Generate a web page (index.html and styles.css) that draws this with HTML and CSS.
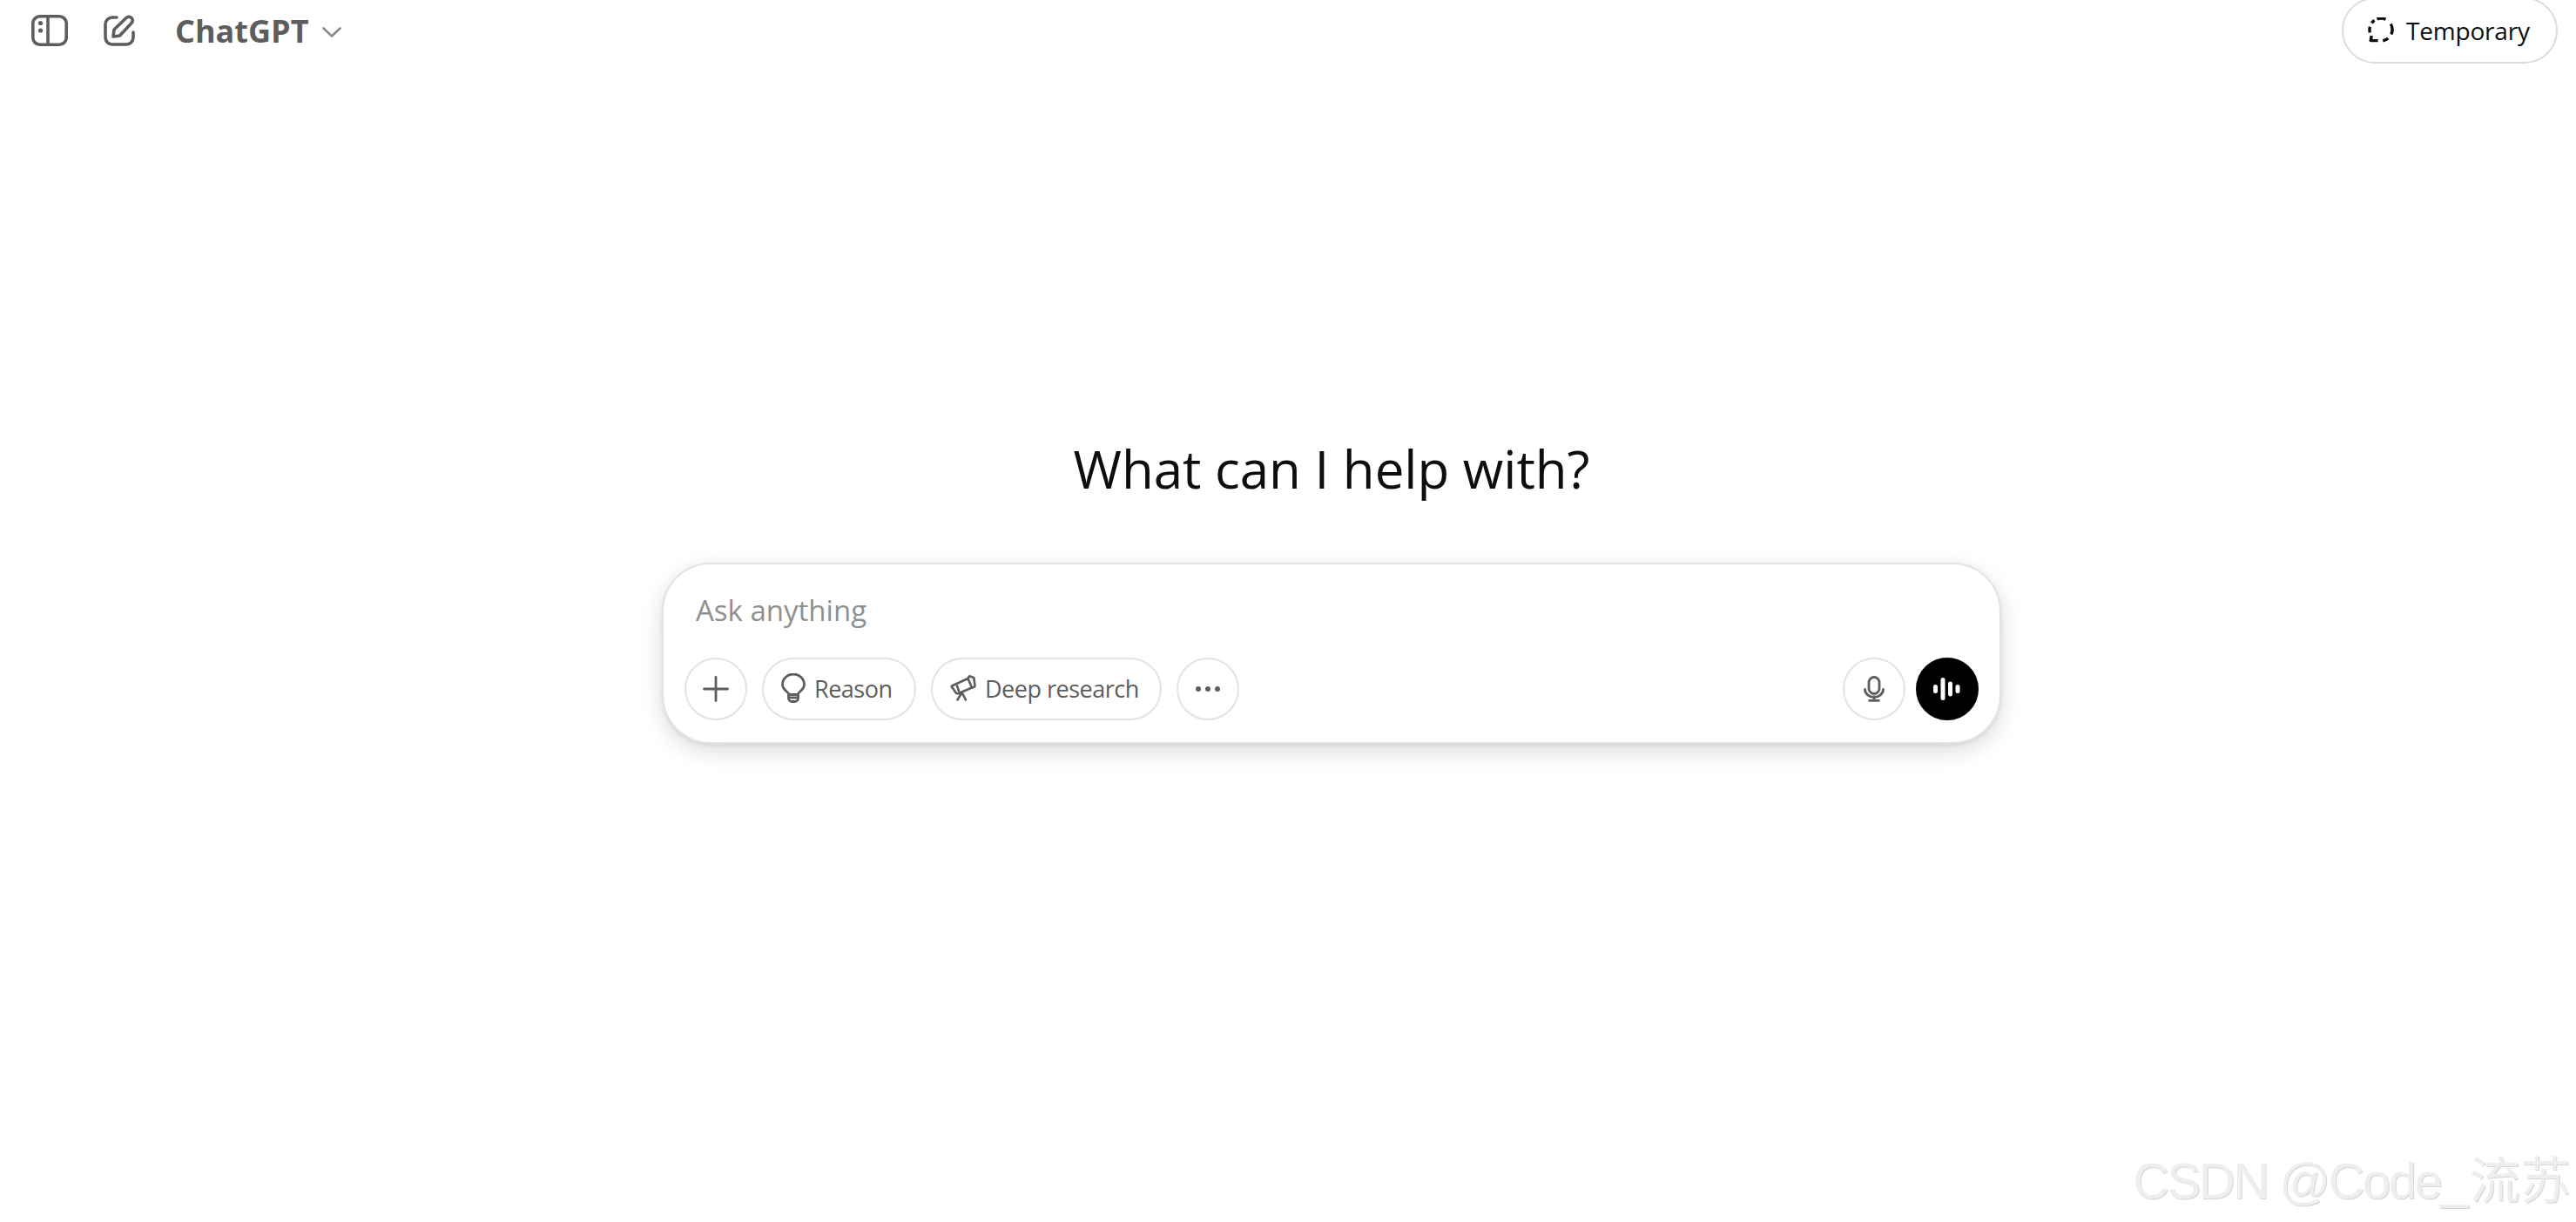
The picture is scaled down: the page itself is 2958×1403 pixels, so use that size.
FILE: index.html
```html
<!DOCTYPE html>
<html>
<head>
    <meta charset="UTF-8">
    <title>ChatGPT</title>
    <link rel="stylesheet" href="styles.css">
</head>
<body>
    <!-- Top bar -->
    <header class="topbar">
        <div class="topbar-left">
            <svg class="icon-sidebar" width="42" height="36" viewBox="0 0 42 36" fill="none" stroke="#5d5d5d" stroke-width="3.6">
                <rect x="1.8" y="1.8" width="38.4" height="32.4" rx="8"/>
                <path d="M19 2v32"/>
                <circle cx="10.5" cy="9.5" r="2.6" fill="#5d5d5d" stroke="none"/>
                <circle cx="10.5" cy="18" r="2.6" fill="#5d5d5d" stroke="none"/>
            </svg>
            <svg class="icon-edit" width="36" height="36" viewBox="0 0 36 36" fill="none" stroke="#5d5d5d" stroke-width="3.6" stroke-linecap="round" stroke-linejoin="round">
                <path d="M15 3H10a8 8 0 0 0-8 8v15a8 8 0 0 0 8 8h16a8 8 0 0 0 8-8v-6"/>
                <path d="M11 25l1-8L26 3.5a4 4 0 0 1 6 6L18.500 24z"/>
            </svg>
            <span class="model-name">ChatGPT</span>
            <svg class="icon-chevron" width="22" height="12" viewBox="0 0 22 12" fill="none" stroke="#8a8a8a" stroke-width="2.6" stroke-linecap="round" stroke-linejoin="round">
                <path d="M1.500 1.500L11 10.500l9.500-9"/>
            </svg>
        </div>
        <button class="temp-btn">
            <svg width="30" height="30" viewBox="0 0 30 30" fill="none" stroke="#0d0d0d" stroke-width="3.4" stroke-linejoin="round">
                <path d="M10.600 1.800a13 13 0 0 1 9.900 .4"/>
                <path d="M26.300 7.500a13 13 0 0 1 .5 12"/>
                <path d="M23.400 24a13 13 0 0 1-6.100 2.800"/>
                <path d="M11.600 26.600H3.200l1-5.600"/>
                <path d="M2.400 17.400a13 13 0 0 1 0-6.800"/>
                <path d="M4.400 6.500a13 13 0 0 1 3.100-3.100"/>
            </svg>
            Temporary
        </button>
    </header>

    <main class="main">
        <h1 class="title">What can I help with?</h1>

        <!-- Prompt box -->
        <div class="composer">
            <div class="prompt">Ask anything</div>
            <div class="toolbar">
                <div class="tools">
                    <button class="round-btn">
                        <svg width="30" height="30" viewBox="0 0 30 30" fill="none" stroke="#5d5d5d" stroke-width="2.800" stroke-linecap="round">
                            <path d="M15 1.500v27M1.500 15h27"/>
                        </svg>
                    </button>
                    <button class="pill-btn pill-reason">
                        <svg width="28" height="34" viewBox="0 0 28 34" fill="none" stroke="#5d5d5d" stroke-width="2.800" stroke-linejoin="round">
                            <path d="M9 24.500c0-3-7.500-5-7.500-11.500a12.500 12 0 0 1 25 0c0 6.500-7.500 8.500-7.500 11.500z"/>
                            <path d="M8.500 24.500h11v4a4 4 0 0 1-4 4h-3a4 4 0 0 1-4-4z"/>
                            <path d="M9 28h10"/>
                        </svg>
                        Reason
                    </button>
                    <button class="pill-btn pill-deep">
                        <svg width="30" height="30" viewBox="0 0 30 30" fill="none" stroke="#5d5d5d" stroke-width="2.600" stroke-linecap="round" stroke-linejoin="round">
                            <path d="M2 12.500L20.500 4l4.500 10.500-15 6.500a3 3 0 0 1-4-1.500L3 15a2 2 0 0 1-1-2.500z"/>
                            <path d="M20.500 4l1-1.800a1.500 1.500 0 0 1 2-.5l3 1a1.500 1.500 0 0 1 1 1.800l1 8a1.500 1.500 0 0 1-1.500 1.500l-2 .5"/>
                            <path d="M8 12.500l2 6"/>
                            <path d="M13.500 20l-5 8.500M13.500 20l4.500 8.500"/>
                        </svg>
                        Deep research
                    </button>
                    <button class="round-btn">
                        <svg width="30" height="8" viewBox="0 0 30 8" fill="#5d5d5d">
                            <circle cx="4" cy="4" r="3"/>
                            <circle cx="15" cy="4" r="3"/>
                            <circle cx="26" cy="4" r="3"/>
                        </svg>
                    </button>
                </div>
                <div class="tools tools-right">
                    <button class="round-btn">
                        <svg width="24" height="30" viewBox="0 0 24 30" fill="none" stroke="#5d5d5d" stroke-width="2.800" stroke-linecap="round">
                            <rect x="6" y="1.500" width="12" height="19" rx="6"/>
                            <path d="M1.500 15.500a10.500 9 0 0 0 21 0"/>
                            <path d="M12 24v4M6.500 28.300h11"/>
                        </svg>
                    </button>
                    <button class="round-btn voice-btn">
                        <svg width="32" height="28" viewBox="0 0 32 28" fill="#fff">
                            <rect x="0" y="9" width="5" height="10" rx="2.500"/>
                            <rect x="8.500" y="1" width="5" height="26" rx="2.500"/>
                            <rect x="17" y="5.500" width="5" height="17" rx="2.500"/>
                            <rect x="25.500" y="9" width="5" height="10" rx="2.500"/>
                        </svg>
                    </button>
                </div>
            </div>
        </div>
    </main>

    <div class="watermark"><span class="watermark-latin">CSDN @Code_</span>流苏</div>
</body>
</html>
```

FILE: styles.css
```css
body {
    margin: 0;
    height: 1403px;
    overflow: hidden;
    background: #fff;
    font-family: "Open Sans", "Noto Sans", sans-serif;
    color: #0d0d0d;
}
button {
    font-family: inherit;
    background: #fff;
    cursor: pointer;
}
.topbar {
    height: 70px;
    display: flex;
    align-items: center;
    justify-content: space-between;
    padding: 0 21px 0 36px;
}
.topbar-left {
    display: flex;
    align-items: center;
}
.icon-edit {
    margin-left: 41px;
}
.model-name {
    margin-left: 46px;
    font-size: 36px;
    font-weight: 700;
    color: #5d5d5d;
}
.icon-chevron {
    margin-left: 15px;
    margin-top: 4px;
}
.temp-btn {
    height: 76px;
    width: 248px;
    flex: none;
    display: flex;
    align-items: center;
    gap: 14px;
    padding: 0 0 0 28px;
    border: 2px solid #dcdcdc;
    border-radius: 38px;
    font-size: 28px;
    letter-spacing: -0.2px;
    color: #0d0d0d;
}
.main {
    display: flex;
    flex-direction: column;
    align-items: center;
    padding-left: 100px;
}
.title {
    margin: 426px 0 0;
    font-size: 60px;
    line-height: 84px;
    font-weight: 400;
    color: #0d0d0d;
}
.composer {
    margin-top: 66px;
    width: 1538px;
    height: 208px;
    box-sizing: border-box;
    border: 2px solid #e3e3e3;
    border-radius: 56px;
    background: #fff;
    box-shadow: 0 8px 26px rgba(0, 0, 0, 0.14), 0 2px 4px rgba(0, 0, 0, 0.07);
    padding: 0 24px;
    display: flex;
    flex-direction: column;
}
.prompt {
    margin-left: 13px;
    height: 107px;
    line-height: 106px;
    font-size: 33px;
    color: #8f8f8f;
}
.toolbar {
    display: flex;
    justify-content: space-between;
}
.tools {
    display: flex;
    gap: 17px;
}
.tools-right {
    gap: 12px;
}
.round-btn, .pill-btn {
    height: 72px;
    box-sizing: border-box;
    border: 2px solid #e3e3e3;
    border-radius: 36px;
    display: flex;
    align-items: center;
    flex: none;
}
.round-btn {
    width: 72px;
    padding: 0;
    justify-content: center;
}
.pill-btn {
    font-size: 27px;
    color: #5d5d5d;
    letter-spacing: -0.5px;
    gap: 10px;
}
.pill-reason {
    width: 177px;
    padding: 0 0 2px 20px;
}
.pill-deep {
    width: 265px;
    padding: 0 0 2px 20px;
}
.voice-btn {
    background: #000;
    border-color: #000;
}
.watermark {
    position: absolute;
    right: 6px;
    bottom: 14px;
    font-family: "Liberation Sans", "Noto Sans CJK SC", sans-serif;
    font-size: 58px;
    line-height: 66px;
    color: #eeeeee;
    text-shadow: 1px 1px 0 #d6d6d6;
    white-space: nowrap;
}
.watermark-latin {
    letter-spacing: -2.5px;
    margin-right: 4px;
}
```
